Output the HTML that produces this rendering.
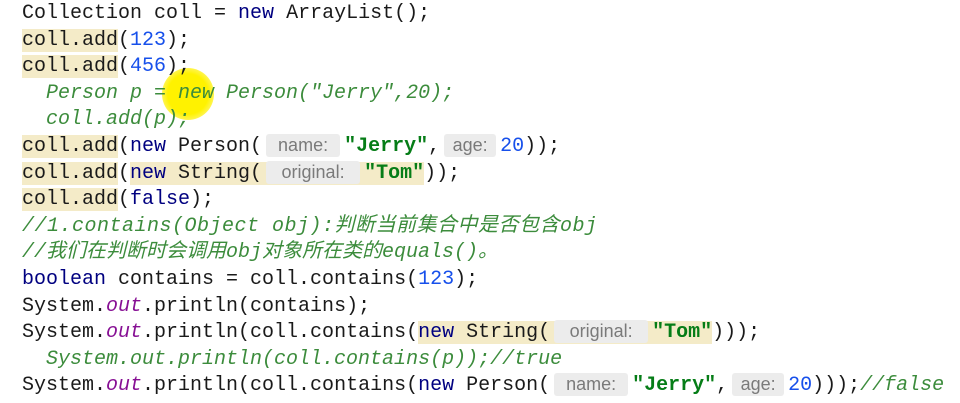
<!DOCTYPE html>
<html><head><meta charset="utf-8"><style>
body{margin:0;width:960px;height:403px;background:#fff;overflow:hidden;position:relative}
.c{position:absolute;left:22px;top:1px;font-family:"Liberation Mono","Noto Sans CJK SC",monospace;font-size:20px;color:#1a1a1a}
.l{height:26.6px;line-height:26.6px;white-space:pre}
.k{color:#000080}
.n{color:#1750eb}
.s{color:#067d17;font-weight:bold}
.cm{color:#3c8c3c;font-style:italic}
.o{color:#871094;font-style:italic}
.hl{background:#f4ebc8}
.h{display:inline-block;font-family:"Liberation Sans",sans-serif;font-size:18px;color:#7a7a7a;background:#ececec;border-radius:3px;text-align:center;line-height:23px;margin:0 4px}
.cur{position:absolute;left:162px;top:68px;width:52px;height:52px;border-radius:50%;background:radial-gradient(#fff200 55%,rgba(255,240,0,0.6) 75%,rgba(255,240,0,0) 100%)}
</style></head><body>
<div class="cur"></div>
<div class="c">
<div class="l">Collection coll = <span class="k">new</span> ArrayList();</div>
<div class="l"><span class="hl">coll.add</span>(<span class="n">123</span>);</div>
<div class="l"><span class="hl">coll.add</span>(<span class="n">456</span>);</div>
<div class="l cm">  Person p = new Person("Jerry",20);</div>
<div class="l cm">  coll.add(p);</div>
<div class="l"><span class="hl">coll.add</span>(<span class="k">new</span> Person(<span class="h" style="width:74px">name:</span><span class="s">"Jerry"</span>,<span class="h" style="width:52px">age:</span><span class="n">20</span>));</div>
<div class="l"><span class="hl">coll.add</span>(<span class="hl"><span class="k">new</span> String(<span class="h" style="width:94px">original:</span><span class="s">"Tom"</span></span>));</div>
<div class="l"><span class="hl">coll.add</span>(<span class="k">false</span>);</div>
<div class="l cm" style="letter-spacing:0.5px">//1.contains(Object obj):判断当前集合中是否包含obj</div>
<div class="l cm">//我们在判断时会调用obj对象所在类的equals()。</div>
<div class="l"><span class="k">boolean</span> contains = coll.contains(<span class="n">123</span>);</div>
<div class="l">System.<span class="o">out</span>.println(contains);</div>
<div class="l">System.<span class="o">out</span>.println(coll.contains(<span class="hl"><span class="k">new</span> String(<span class="h" style="width:94px">original:</span><span class="s">"Tom"</span></span>)));</div>
<div class="l cm">  System.out.println(coll.contains(p));//true</div>
<div class="l">System.<span class="o">out</span>.println(coll.contains(<span class="k">new</span> Person(<span class="h" style="width:74px">name:</span><span class="s">"Jerry"</span>,<span class="h" style="width:52px">age:</span><span class="n">20</span>)));<span class="cm">//false</span></div>
</div>
</body></html>
